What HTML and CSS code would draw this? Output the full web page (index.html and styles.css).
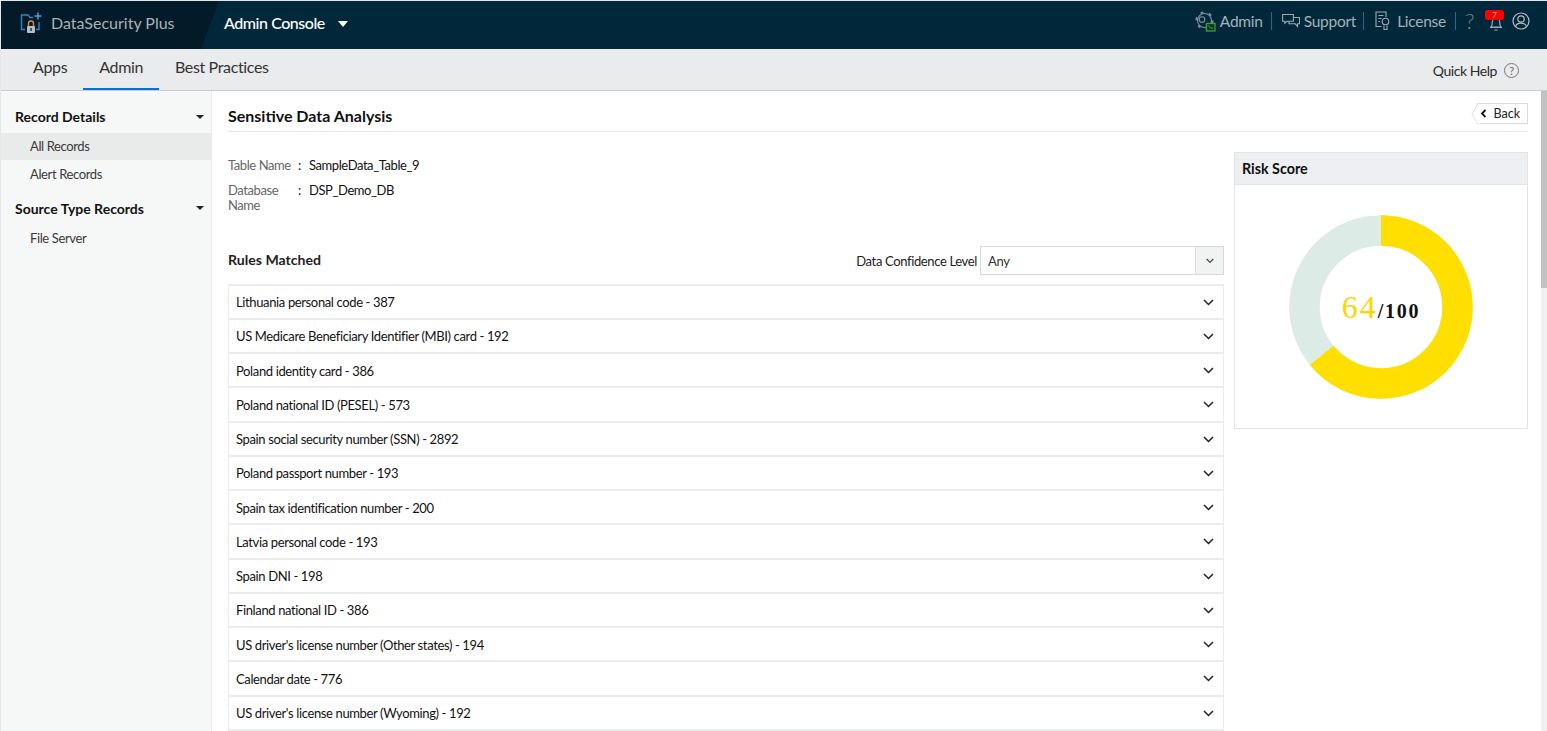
FILE: index.html
```html
<!DOCTYPE html>
<html lang="en">
<head>
<meta charset="utf-8">
<title>Sensitive Data Analysis</title>
<link rel="stylesheet" href="styles.css">
</head>
<body>
<div class="app">
  <header class="topbar">
    <div class="brand">
      <svg class="brand-icon" width="24" height="24" viewBox="0 0 24 24" fill="none">
        <path d="M6 18.500H2.500V4H9l2 2.500h3" stroke="#2f86c1" stroke-width="1.400"/>
        <path d="M20 11v7.500h-3" stroke="#2f86c1" stroke-width="1.400"/>
        <path d="M19 1.500v7M15.500 5h7" stroke="#4aa3dc" stroke-width="1.500"/>
        <path d="M9.500 15v-2.500a2.500 2.500 0 0 1 5 0V15" stroke="#d98a3a" stroke-width="1.400"/>
        <rect x="8" y="15" width="8" height="7" rx="1" fill="#b9bec2"/>
        <rect x="11.300" y="17" width="1.500" height="3" fill="#24323a"/>
      </svg>
      <span class="brand-name">DataSecurity Plus</span>
    </div>
    <div class="console">
      <span>Admin Console</span>
      <i class="console-caret"></i>
    </div>
    <nav class="top-actions">
      <a class="top-link">
        <svg width="21" height="21" viewBox="0 0 21 21" fill="none">
          <circle cx="9.500" cy="9.500" r="7" stroke="#7f929c" stroke-width="1.100"/>
          <circle cx="9.500" cy="9.500" r="8.200" stroke="#7f929c" stroke-width="1.800" stroke-dasharray="3 5.590"/>
          <circle cx="7" cy="8.500" r="2.800" stroke="#7f929c" stroke-width="1.100"/>
          <rect x="11.500" y="12.500" width="8.500" height="7.500" fill="#16331f" stroke="#2fa341" stroke-width="1.300"/>
          <path d="M13.500 14.500l2 2.500h2.500" stroke="#2fa341"/>
        </svg>
        <span>Admin</span>
      </a>
      <i class="divider"></i>
      <a class="top-link">
        <svg width="18" height="16" viewBox="0 0 18 16" fill="none" stroke="#9aabb3" stroke-width="1.100">
          <path d="M.6 1.500h10.800v6.800H5L2.800 10.200V8.300H.6z"/>
          <path d="M7 8.300v2.500h6.300l2.200 2.700v-2.700h2V4.500h-6"/>
        </svg>
        <span>Support</span>
      </a>
      <i class="divider divider-b"></i>
      <a class="top-link top-link-license">
        <svg width="16" height="20" viewBox="0 0 16 20" fill="none" stroke="#9aabb3" stroke-width="1.100">
          <path d="M6.500 15.500H1V1h10v5"/>
          <path d="M3.500 4.500h5M3.500 7.500h3M3.500 10.500h1.500"/>
          <circle cx="10.500" cy="10.500" r="3.300"/>
          <path d="M9 14.500v4h3v-4"/>
        </svg>
        <span>License</span>
      </a>
      <i class="divider divider-c"></i>
      <span class="help-mark">?</span>
      <span class="bell">
        <svg width="14" height="14" viewBox="0 0 14 14" fill="none" stroke="#9aabb3" stroke-width="1.200">
          <path d="M2 10c1-1 1.300-2.500 1.300-5a3.700 3.700 0 0 1 7.400 0c0 2.500.3 4 1.300 5zM1 10.500h12M5.500 13h3"/>
        </svg>
        <b class="badge">7</b>
      </span>
      <svg class="user-icon" width="18" height="18" viewBox="0 0 18 18" fill="none" stroke="#b3bfc5" stroke-width="1.200">
        <circle cx="9" cy="9" r="8"/>
        <circle cx="9" cy="7" r="3.200"/>
        <path d="M3.500 14.800c.6-2.700 2.700-3.700 5.500-3.700s4.900 1 5.500 3.700"/>
      </svg>
    </nav>
  </header>

  <div class="tabbar">
    <div class="tabs">
      <a class="tab">Apps</a>
      <a class="tab tab-active">Admin</a>
      <a class="tab">Best Practices</a>
    </div>
    <a class="quick-help">
      <span>Quick Help</span>
      <span class="quick-icon">?</span>
    </a>
  </div>

  <div class="body">
    <aside class="sidebar">
      <div class="side-head side-first"><span>Record Details</span><i class="side-caret"></i></div>
      <a class="side-item side-active">All Records</a>
      <a class="side-item side-tall">Alert Records</a>
      <div class="side-head"><span>Source Type Records</span><i class="side-caret"></i></div>
      <a class="side-item">File Server</a>
    </aside>

    <main class="content">
      <div class="page-head">
        <h1>Sensitive Data Analysis</h1>
        <a class="back"><svg width="7" height="9" viewBox="0 0 7 9" fill="none" stroke="#111" stroke-width="1.800"><path d="M5.500 1 2 4.500 5.500 8"/></svg>Back</a>
      </div>

      <div class="columns">
        <section class="left">
          <dl class="meta">
            <dt>Table Name</dt><dd class="colon">:</dd><dd>SampleData_Table_9</dd>
            <dt>Database Name</dt><dd class="colon">:</dd><dd>DSP_Demo_DB</dd>
          </dl>

          <div class="rules-head">
            <h2>Rules Matched</h2>
            <div class="filter">
              <label>Data Confidence Level</label>
              <div class="select">
                <span>Any</span>
                <span class="select-btn"><svg width="8" height="6" viewBox="0 0 8 6" fill="none" stroke="#444" stroke-width="1.200"><path d="M.7 1 4 4.300 7.300 1"/></svg></span>
              </div>
            </div>
          </div>

          <ul class="rules">
            <li><span>Lithuania personal code - 387</span><svg class="chev" width="11" height="7" viewBox="0 0 11 7"><path d="M1 1l4.500 4.500L10 1"/></svg></li>
            <li><span>US Medicare Beneficiary Identifier (MBI) card - 192</span><svg class="chev" width="11" height="7" viewBox="0 0 11 7"><path d="M1 1l4.500 4.500L10 1"/></svg></li>
            <li><span>Poland identity card - 386</span><svg class="chev" width="11" height="7" viewBox="0 0 11 7"><path d="M1 1l4.500 4.500L10 1"/></svg></li>
            <li><span>Poland national ID (PESEL) - 573</span><svg class="chev" width="11" height="7" viewBox="0 0 11 7"><path d="M1 1l4.500 4.500L10 1"/></svg></li>
            <li><span>Spain social security number (SSN) - 2892</span><svg class="chev" width="11" height="7" viewBox="0 0 11 7"><path d="M1 1l4.500 4.500L10 1"/></svg></li>
            <li><span>Poland passport number - 193</span><svg class="chev" width="11" height="7" viewBox="0 0 11 7"><path d="M1 1l4.500 4.500L10 1"/></svg></li>
            <li><span>Spain tax identification number - 200</span><svg class="chev" width="11" height="7" viewBox="0 0 11 7"><path d="M1 1l4.500 4.500L10 1"/></svg></li>
            <li><span>Latvia personal code - 193</span><svg class="chev" width="11" height="7" viewBox="0 0 11 7"><path d="M1 1l4.500 4.500L10 1"/></svg></li>
            <li><span>Spain DNI - 198</span><svg class="chev" width="11" height="7" viewBox="0 0 11 7"><path d="M1 1l4.500 4.500L10 1"/></svg></li>
            <li><span>Finland national ID - 386</span><svg class="chev" width="11" height="7" viewBox="0 0 11 7"><path d="M1 1l4.500 4.500L10 1"/></svg></li>
            <li><span>US driver's license number (Other states) - 194</span><svg class="chev" width="11" height="7" viewBox="0 0 11 7"><path d="M1 1l4.500 4.500L10 1"/></svg></li>
            <li><span>Calendar date - 776</span><svg class="chev" width="11" height="7" viewBox="0 0 11 7"><path d="M1 1l4.500 4.500L10 1"/></svg></li>
            <li><span>US driver's license number (Wyoming) - 192</span><svg class="chev" width="11" height="7" viewBox="0 0 11 7"><path d="M1 1l4.500 4.500L10 1"/></svg></li>
          </ul>
        </section>

        <section class="risk">
          <h3>Risk Score</h3>
          <div class="risk-body">
            <div class="donut">
              <svg width="184" height="184" viewBox="0 0 184 184" fill="none">
                <circle cx="92" cy="92" r="76.500" stroke="#dcebe5" stroke-width="30.500"/>
                <circle cx="92" cy="92" r="76.500" stroke="#ffdf00" stroke-width="30.500" stroke-dasharray="307.600 480.700" transform="rotate(-90 92 92)"/>
              </svg>
              <div class="score"><span class="score-value">64</span><span class="score-max">/100</span></div>
            </div>
          </div>
        </section>
      </div>
    </main>

    <div class="scrollbar"><i class="thumb"></i></div>
  </div>
</div>
</body>
</html>
```
FILE: styles.css
```css
* { box-sizing: border-box; }
html, body { margin: 0; height: 100%; overflow: hidden; }
body { font-family: Lato, "Open Sans", sans-serif; color: #111; background: #fff; }
a { text-decoration: none; color: inherit; }
ul, dl, dd, h1, h2, h3 { margin: 0; padding: 0; }

.app { height: 731px; display: flex; flex-direction: column; border-top: 1px solid #e4e6e7; border-left: 1px solid #e4e6e7; }

.topbar { height: 48px; flex: none; display: flex; align-items: center; background: #00283a; color: #fff; position: relative; }
.brand { position: relative; width: 200px; height: 100%; display: flex; align-items: center; padding: 0 0 6px 18px; gap: 8px; }
.brand::before { content: ""; position: absolute; inset: 0 -18px 0 0; background: #031b29; clip-path: polygon(0 0, 100% 0, 200px 100%, 0 100%); }
.brand-icon, .brand-name { position: relative; }
.brand-icon { margin-top: 2px; }
.brand-name { font-size: 16px; color: #a8b2b8; }
.console { height: 100%; display: flex; align-items: center; margin-left: 23px; padding-bottom: 6px; font-size: 16px; letter-spacing: -.45px; font-weight: 500; color: #fff; }
.console-caret { width: 0; height: 0; margin-left: 13px; margin-top: 3px; border-left: 5px solid transparent; border-right: 5px solid transparent; border-top: 6px solid #fff; }

.top-actions { height: 100%; margin-left: auto; display: flex; align-items: center; padding: 0 17px 8px 0; color: #a4b3ba; font-size: 15.500px; letter-spacing: -.26px; }
.top-link { display: flex; align-items: center; gap: 4px; }
.top-link-license { gap: 6px; }
.divider { width: 1px; height: 18px; background: #1d6a92; margin: 0 10px 0 8px; }
.divider-b { margin: 0 11px 0 7px; }
.divider-c { margin: 0 9px; }
.help-mark { font-size: 22px; font-weight: 300; color: #6f8792; width: 10px; line-height: 20px; }
.bell { position: relative; display: flex; margin: 6px 0 0 14px; }
.badge { position: absolute; top: -7px; left: -4px; width: 19px; height: 10px; border-radius: 3px; background: #f60404; color: #f3a7a7; font-size: 8px; font-weight: 400; line-height: 10px; text-align: center; }
.user-icon { margin-left: 9px; }

.tabbar { height: 42px; flex: none; display: flex; justify-content: space-between; background: #e9ebed; border-bottom: 1px solid #c9cccf; }
.tabs { display: flex; padding-left: 16px; }
.tab { height: 41px; padding: 8px 16px 0; font-size: 16px; letter-spacing: -.36px; line-height: 20px; color: #333; }
.tab-active { border-bottom: 2px solid #0b6fce; }
.quick-help { display: flex; align-items: center; gap: 7px; font-size: 14px; letter-spacing: -.45px; color: #2b2b2b; padding: 1px 28px 0 0; }
.quick-icon { width: 15px; height: 15px; border: 1px solid #777; border-radius: 50%; font-size: 11px; line-height: 13px; text-align: center; color: #666; }

.body { flex: 1; min-height: 0; display: flex; }
.sidebar { width: 211px; flex: none; background: #f6f7f7; border-right: 1px solid #eceeee; }
.side-head { display: flex; justify-content: space-between; align-items: center; height: 32px; padding: 0 7px 0 14px; font-size: 14px; font-weight: 700; color: #111; }
.side-first { margin-top: 9px; height: 33px; }
.side-caret { width: 0; height: 0; border-left: 4.500px solid transparent; border-right: 4.500px solid transparent; border-top: 4.500px solid #222; }
.side-item { display: block; height: 27px; padding-left: 29px; font-size: 13px; letter-spacing: -.38px; line-height: 29px; color: #3a3a3a; }
.side-tall { height: 28px; margin-bottom: 4px; }
.side-active { background: #e9ebeb; line-height: 27px; }

.content { flex: 1; min-width: 0; padding: 0 13px 0 16px; overflow: hidden; }
.page-head { height: 41px; display: flex; justify-content: space-between; align-items: center; border-bottom: 1px solid #e6e8e8; }
h1 { font-size: 16px; font-weight: 700; color: #111; padding-top: 9px; }
.back { position: relative; display: flex; align-items: center; gap: 6px; height: 21px; padding: 0 7px 0 3px; margin-top: 4px; font-size: 12.500px; color: #222; border: 1px solid #d9dcdc; border-left: 0; background: #fff; }
.back::before { content: ""; position: absolute; left: -7.500px; top: 2px; width: 15px; height: 15px; transform: scaleX(.57) rotate(45deg); border-left: 1px solid #d9dcdc; border-bottom: 1px solid #d9dcdc; background: #fff; }
.back svg { position: relative; }

.columns { display: flex; gap: 10px; align-items: flex-start; }
.left { width: 996px; flex: none; }

.meta { display: grid; grid-template-columns: 70px 11px 1fr; font-size: 13px; letter-spacing: -.42px; line-height: 15px; padding-top: 26px; row-gap: 10px; }
.meta dt { color: #666; }
.meta dd { color: #111; }
.colon { color: #444; }

.rules-head { display: flex; justify-content: space-between; align-items: center; margin-top: 33px; height: 29px; }
h2 { font-size: 14.100px; font-weight: 700; color: #222; padding-bottom: 2px; }
.filter { display: flex; align-items: center; gap: 3px; font-size: 13px; letter-spacing: -.36px; color: #222; }
.select { width: 244px; height: 29px; display: flex; justify-content: space-between; align-items: center; border: 1px solid #d6d9d9; padding-left: 7px; background: #fff; color: #333; }
.select-btn { width: 28px; height: 27px; display: flex; align-items: center; justify-content: center; background: #f1f2f2; border-left: 1px solid #dcdede; }

.rules { list-style: none; margin-top: 8.500px; border: 2px solid #ebecec; border-bottom: 0; border-left-width: 1px; border-right-width: 1px; }
.rules li { height: 34.250px; display: flex; align-items: center; justify-content: space-between; padding: 1px 9px 0 7px; font-size: 13px; letter-spacing: -.37px; color: #111; border-bottom: 2px solid #ebecec; }
.chev { fill: none; stroke: #222; stroke-width: 1.500; }

.risk { width: 294px; flex: none; margin-top: 20px; border: 1px solid #e1e4e4; }
h3 { height: 32px; padding-left: 7px; font-size: 14.300px; font-weight: 700; line-height: 31px; color: #111; background: #edeff1; border-bottom: 1px solid #e1e4e4; }
.risk-body { height: 243px; display: flex; justify-content: center; padding-top: 30px; }
.donut { position: relative; width: 184px; height: 184px; }
.score { position: absolute; inset: 0; display: flex; align-items: baseline; justify-content: center; padding-top: 75px; font-family: "Liberation Serif", serif; }
.score-value { font-size: 32px; color: #ffd400; letter-spacing: 2px; line-height: 34px; }
.score-max { font-size: 20px; font-weight: 700; color: #111; letter-spacing: 1.700px; }

.scrollbar { width: 6px; flex: none; background: #f1f1f1; }
.thumb { display: block; height: 197px; background: #c2c2c2; }
```
